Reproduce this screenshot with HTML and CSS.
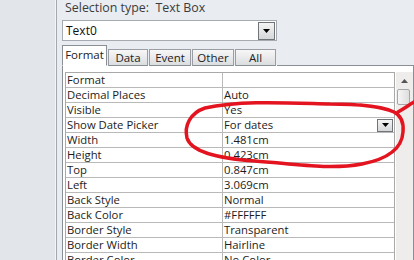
FILE: index.html
```html
<!DOCTYPE html>
<html>
<head>
<meta charset="utf-8">
<link rel="stylesheet" href="styles.css">
</head>
<body>
<div class="window">
  <div class="side"></div>
  <div class="panel">
    <div class="seltype">Selection type:&nbsp; Text Box</div>
    <div class="combo">
      <span class="combo-text">Text0</span>
      <span class="dd"><svg width="7" height="4" viewBox="0 0 7 4"><path d="M0 0H7L3.5 4Z" fill="#000"/></svg></span>
    </div>
    <div class="tabs">
      <div class="tab active">Format</div>
      <div class="tab">Data</div>
      <div class="tab">Event</div>
      <div class="tab">Other</div>
      <div class="tab">All</div>
      <div class="tab-rest"></div>
    </div>
    <div class="sheet">
      <div class="gridwrap">
        <div class="grid">
          <div class="row"><div class="label">Format</div><div class="value"></div></div>
          <div class="row"><div class="label">Decimal Places</div><div class="value">Auto</div></div>
          <div class="row"><div class="label">Visible</div><div class="value">Yes</div></div>
          <div class="row"><div class="label">Show Date Picker</div><div class="value">For dates<span class="dd small"><svg width="7" height="4" viewBox="0 0 7 4"><path d="M0 0H7L3.5 4Z" fill="#000"/></svg></span></div></div>
          <div class="row"><div class="label">Width</div><div class="value">1.481cm</div></div>
          <div class="row"><div class="label">Height</div><div class="value">0.423cm</div></div>
          <div class="row"><div class="label">Top</div><div class="value">0.847cm</div></div>
          <div class="row"><div class="label">Left</div><div class="value">3.069cm</div></div>
          <div class="row"><div class="label">Back Style</div><div class="value">Normal</div></div>
          <div class="row"><div class="label">Back Color</div><div class="value">#FFFFFF</div></div>
          <div class="row"><div class="label">Border Style</div><div class="value">Transparent</div></div>
          <div class="row"><div class="label">Border Width</div><div class="value">Hairline</div></div>
          <div class="row"><div class="label">Border Color</div><div class="value">No Color</div></div>
        </div>
        <div class="scroll">
          <div class="sb-up"><svg width="7" height="4" viewBox="0 0 7 4"><path d="M0 4H7L3.5 0Z" fill="#555"/></svg></div>
          <div class="sb-thumb"></div>
          <div class="sb-track"></div>
        </div>
      </div>
    </div>
  </div>
  <svg class="ink" width="414" height="260" viewBox="0 0 414 260">
    <path d="M398 112 C 405 108, 409 105, 414 102" fill="none" stroke="#e3141f" stroke-width="3.5" stroke-linecap="round"/>
    <path d="M394 112 C 380 106, 360 104, 330 104 C 290 103, 240 100, 205 108 C 190 113, 184 126, 187 138 C 191 151, 214 158, 255 161 C 295 164, 330 170, 362 164 C 388 159, 402 148, 403 132 C 404 121, 400 115, 394 112 C 386 108, 372 106, 360 105"
      fill="none" stroke="#e3141f" stroke-width="3.5" stroke-linecap="round"/>
  </svg>
</div>
</body>
</html>
```

FILE: styles.css
```css
* { box-sizing: border-box; }
html, body { margin: 0; padding: 0; }
body {
  width: 414px;
  height: 260px;
  overflow: hidden;
  font-family: "Open Sans", "Noto Sans", sans-serif;
  font-size: 11px;
  color: #1a1a1a;
  background: #e4e7eb;
}
.window {
  position: relative;
  display: flex;
  width: 414px;
  height: 260px;
}
.side {
  width: 57px;
  flex: none;
  background: #e2e5e9;
  border-right: 1px solid #a4a9b0;
  box-shadow: inset -1px 0 0 #f4f5f7;
}
.panel {
  flex: 1;
  display: flex;
  flex-direction: column;
  background: #e9ecf0;
  padding-left: 5px;
  min-width: 0;
}
.seltype {
  height: 20px;
  line-height: 16px;
  padding-left: 3px;
  font-size: 12.4px;
  color: #3c3c3c;
}
.combo {
  width: 215px;
  height: 21px;
  display: flex;
  align-items: center;
  justify-content: space-between;
  background: #fff;
  border: 1px solid #a6abb2;
  padding: 0 1px 0 3px;
  font-size: 12px;
  color: #111;
}
.dd {
  width: 17px;
  height: 18px;
  display: flex;
  align-items: center;
  justify-content: center;
  border: 1px solid #6f7479;
  background: linear-gradient(#f4f4f4, #d6d7d9);
}
.dd.small {
  width: 16px;
  height: 13px;
  margin-left: auto;
  margin-right: 1px;
}
.tabs {
  display: flex;
  align-items: flex-end;
  height: 21px;
  margin-top: 4px;
  position: relative;
  z-index: 1;
}
.tab {
  height: 17px;
  line-height: 16px;
  padding: 0;
  font-size: 11.5px;
  color: #222;
  border: 1px solid #9a9ea4;
  border-bottom: 1px solid #8a8e95;
  margin-right: 1px;
  text-align: center;
  background: linear-gradient(#f7f7f7, #dcdde0);
}
.tab:nth-child(2) { width: 40px; }
.tab:nth-child(3) { width: 42px; }
.tab:nth-child(4) { width: 42px; }
.tab:nth-child(5) { width: 41px; }
.tab.active {
  width: 45px;
  height: 21px;
  line-height: 18px;
  background: #fff;
  border-color: #8a8e95;
  border-bottom: 1px solid #fff;
}
.tab-rest {
  flex: 1;
  border-bottom: 1px solid #8a8e95;
}
.sheet {
  flex: 1;
  margin-top: -1px;
  background: #fff;
  border-left: 1px solid #8a8e95;
  border-right: 1px solid #8a8e95;
  padding: 7px 0 0 2px;
  overflow: hidden;
}
.gridwrap {
  display: flex;
  gap: 1px;
  align-items: flex-start;
}
.grid {
  width: 331px;
  border: 1px solid #a9a9a9;
  border-bottom: none;
}
.row {
  display: grid;
  grid-template-columns: 157px 1fr;
  height: 15px;
  border-bottom: 1px solid #b9b9b9;
  font-size: 11.3px;
  line-height: 14px;
  color: #1c1c1c;
}
.label {
  padding-left: 1px;
  border-right: 1px solid #b9b9b9;
  white-space: nowrap;
}
.value {
  display: flex;
  align-items: center;
  padding-left: 1px;
  white-space: nowrap;
}
.scroll {
  width: 17px;
  height: 200px;
  display: flex;
  flex-direction: column;
  background: #eeedeb;
}
.sb-up {
  height: 17px;
  display: flex;
  align-items: center;
  justify-content: center;
}
.sb-thumb {
  height: 16px;
  margin: 0 3px 0 1px;
  border: 1px solid #a7a7a7;
  border-radius: 2px;
  background: linear-gradient(90deg, #f6f6f6, #dedede);
}
.sb-track { flex: 1; }
.ink {
  position: absolute;
  left: 0;
  top: 0;
  pointer-events: none;
}
```
